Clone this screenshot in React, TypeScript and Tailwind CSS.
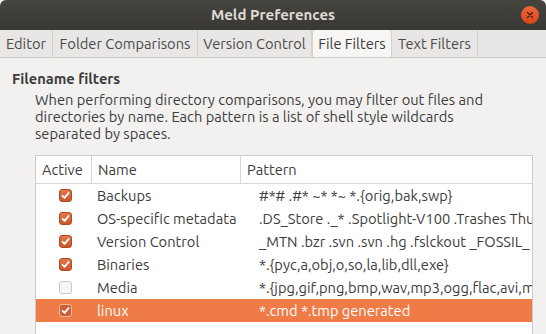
import React from "react";

const Check = ({ on, sel }: { on: boolean; sel?: boolean }) =>
  on ? (
    <div
      className={`w-[13px] h-[13px] rounded-[3px] flex items-center justify-center ${
        sel ? "bg-[#c9603a] border border-[#f5b89a]" : "bg-gradient-to-b from-[#e2774a] to-[#c9562a] border border-[#b04a22]"
      }`}
    >
      <svg width="9" height="9" viewBox="0 0 9 9">
        <path d="M1.5 4.8 L3.6 6.8 L7.6 2" stroke="white" strokeWidth="1.8" fill="none" strokeLinecap="round" strokeLinejoin="round" />
      </svg>
    </div>
  ) : (
    <div className="w-[13px] h-[13px] rounded-[3px] bg-[#f7f7f7] border border-[#cbc8c4]" />
  );

const rows = [
  { on: true, name: "Backups", pat: "#*# .#* ~* *~ *.{orig,bak,swp}" },
  { on: true, name: "OS-specific metadata", pat: ".DS_Store ._* .Spotlight-V100 .Trashes Thumbs.db Desktop.ini" },
  { on: true, name: "Version Control", pat: "_MTN .bzr .svn .svn .hg .fslckout _FOSSIL_ CVS" },
  { on: true, name: "Binaries", pat: "*.{pyc,a,obj,o,so,la,lib,dll,exe}" },
  { on: false, name: "Media", pat: "*.{jpg,gif,png,bmp,wav,mp3,ogg,flac,avi,mpg,xcf,xpm}" },
  { on: true, name: "linux", pat: "*.cmd *.tmp generated", sel: true },
];

const tabs = [
  { t: "Editor", w: "w-[53px]" },
  { t: "Folder Comparisons", w: "w-[145px]" },
  { t: "Version Control", w: "w-[114px]" },
  { t: "File Filters", w: "w-[80px]", active: true },
  { t: "Text Filters", w: "w-[86px]" },
];

export default function App() {
  return (
    <div
      className="w-[546px] h-[334px] overflow-hidden bg-[#f2f1f0] text-[#3c3c3c] flex flex-col"
      style={{ fontFamily: "Ubuntu, 'Noto Sans', sans-serif" }}
    >
      <div className="h-[30px] shrink-0 bg-gradient-to-b from-[#46443f] to-[#393834] flex items-center justify-center relative rounded-t-[6px]">
        <span className="text-[#dfdbd2] font-bold text-[15px]">Meld Preferences</span>
        <div className="absolute right-[7px] top-[6px] w-[18px] h-[18px] rounded-full bg-gradient-to-b from-[#f0683a] to-[#d8441a] flex items-center justify-center">
          <svg width="8" height="8" viewBox="0 0 8 8">
            <path d="M1.5 1.5 L6.5 6.5 M6.5 1.5 L1.5 6.5" stroke="#4a1a08" strokeWidth="1.3" strokeLinecap="round" />
          </svg>
        </div>
      </div>
      <div className="h-[28px] shrink-0 bg-[#e8e7e5] border-b border-[#cdc9c4] flex items-end">
        {tabs.map((t) => (
          <div
            key={t.t}
            className={`${t.w} flex items-center justify-center text-[14.67px] border-r border-[#d5d2ce] ${
              t.active ? "bg-[#f7f6f5] rounded-t-[4px] border-l border-t border-[#cdc9c4] h-[28px] text-[#3c3c3c]" : "h-[27px] text-[#4a4a4a]"
            }`}
          >
            {t.t}
          </div>
        ))}
      </div>
      <div className="flex-1 flex flex-col pl-[12px] pt-[11px]">
        <div className="font-bold text-[14.67px] text-[#3c3c3c] leading-[19px]">Filename filters</div>
        <div className="pl-[23px] pt-[3px] text-[14.67px] leading-[17px] text-[#3c3c3c] w-[510px]">
          When performing directory comparisons, you may filter out files and directories by name. Each pattern is a list of shell style wildcards separated by spaces.
        </div>
        <div className="ml-[23px] mt-[13px] w-[498px] flex-1 bg-white border border-[#cdc9c4] border-b-0 overflow-hidden">
          <div className="flex h-[28px] border-b border-[#d8d6d3] text-[14.67px] text-[#3c3c3c]">
            <div className="w-[56px] border-r border-[#d8d6d3] flex items-center pl-[6px]">Active</div>
            <div className="w-[149px] border-r border-[#d8d6d3] flex items-center pl-[6px]">Name</div>
            <div className="flex-1 flex items-center pl-[6px]">Pattern</div>
          </div>
          {rows.map((r) => (
            <div
              key={r.name}
              className={`flex h-[23px] items-center text-[14.67px] ${r.sel ? "bg-[#ef7b46] text-white" : "text-[#3c3c3c]"}`}
            >
              <div className="w-[56px] flex justify-center pl-[2px]">
                <Check on={r.on} sel={r.sel} />
              </div>
              <div className="w-[149px] pl-[5px] whitespace-nowrap">{r.name}</div>
              <div className="flex-1 pl-[18px] whitespace-nowrap overflow-hidden">{r.pat}</div>
            </div>
          ))}
        </div>
      </div>
    </div>
  );
}
